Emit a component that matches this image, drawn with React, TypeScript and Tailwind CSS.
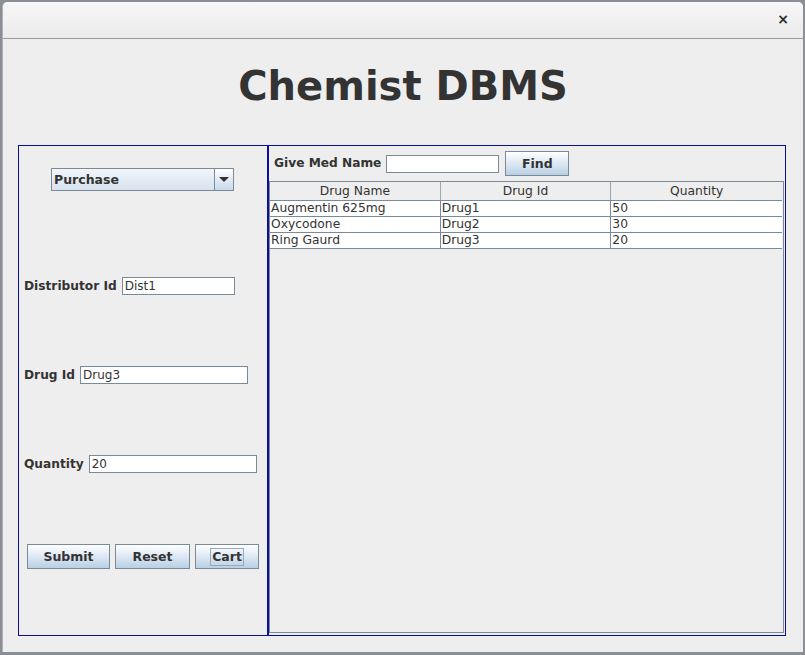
import React from "react"

const rows = [
  { name: "Augmentin 625mg", id: "Drug1", qty: "50" },
  { name: "Oxycodone", id: "Drug2", qty: "30" },
  { name: "Ring Gaurd", id: "Drug3", qty: "20" },
]

function Field({ value, width }: { value: string; width: string }) {
  return (
    <div className={`${width} h-[18px] bg-white border border-[#7a8a99] pl-[2px] text-[12px] leading-[16px] text-[#333]`}>
      {value}
    </div>
  )
}

function Btn({ label, width, focus }: { label: string; width: string; focus?: boolean }) {
  return (
    <div className={`${width} h-[25px] border border-[#7a8a99] bg-gradient-to-b from-[#ffffff] via-[#dde8f3] to-[#b8cfe5] flex items-center justify-center text-[12.5px] font-bold text-[#333]`}>
      <span className={focus ? "border border-[#9aa8b8] px-[1px] leading-[16px]" : "leading-[16px]"}>{label}</span>
    </div>
  )
}

export default function App() {
  return (
    <div className="w-[805px] h-[655px] bg-[#8a8f96] pl-[2px] pt-[2px] overflow-hidden" style={{ fontFamily: '"DejaVu Sans", sans-serif' }}>
      <div className="w-[801px] h-[650px] bg-[#eeeeee] rounded-t-[5px] border-l border-[#b0b0b0] flex flex-col">
        {/* title bar */}
        <div className="h-[37px] rounded-t-[5px] bg-gradient-to-b from-[#f7f7f7] to-[#ebebeb] border-b border-[#9a9a9a] flex items-center justify-end pr-[14px]">
          <span className="text-[14px] font-bold text-[#2e2e2e] leading-none pb-[2px]">×</span>
        </div>

        {/* heading */}
        <div className="h-[106px] flex items-center justify-center">
          <h1 className="text-[40px] font-bold text-[#333] leading-none pb-[12px]">Chemist DBMS</h1>
        </div>

        <div className="flex pl-[15px] h-[491px]">
          {/* left panel */}
          <div className="w-[250px] h-full border border-[#0e0e9e] flex flex-col">
            <div className="ml-[32px] mt-[22px] w-[183px] h-[23px] border border-[#7a8a99] bg-gradient-to-b from-[#f2f6fa] to-[#d6e2ee] flex">
              <div className="flex-1 pl-[2px] text-[12.5px] font-bold text-[#333] leading-[21px]">Purchase</div>
              <div className="w-[19px] border-l border-[#7a8a99] bg-gradient-to-b from-[#ffffff] to-[#c8d9ea] flex items-center justify-center">
                <div className="w-0 h-0 border-l-[5px] border-r-[5px] border-t-[5px] border-l-transparent border-r-transparent border-t-[#333]" />
              </div>
            </div>

            <div className="mt-[86px] ml-[5px] h-[18px] flex items-center gap-[5px]">
              <span className="text-[12.2px] font-bold text-[#333] leading-[18px]">Distributor Id</span>
              <Field value="Dist1" width="w-[113px]" />
            </div>

            <div className="mt-[71px] ml-[5px] h-[18px] flex items-center gap-[5px]">
              <span className="text-[12.2px] font-bold text-[#333] leading-[18px]">Drug Id</span>
              <Field value="Drug3" width="w-[168px]" />
            </div>

            <div className="mt-[71px] ml-[5px] h-[18px] flex items-center gap-[5px]">
              <span className="text-[12.2px] font-bold text-[#333] leading-[18px]">Quantity</span>
              <Field value="20" width="w-[168px]" />
            </div>

            <div className="mt-[71px] ml-[8px] flex gap-[5px]">
              <Btn label="Submit" width="w-[83px]" />
              <Btn label="Reset" width="w-[75px]" />
              <Btn label="Cart" width="w-[64px]" focus />
            </div>
          </div>

          {/* right panel */}
          <div className="w-[518px] h-full border border-[#0e0e9e] flex flex-col">
            <div className="h-[35px] flex items-center pl-[5px]">
              <span className="text-[12.2px] font-bold text-[#333] mr-[5px]">Give Med Name</span>
              <Field value="" width="w-[113px]" />
              <div className="ml-[6px]">
                <Btn label="Find" width="w-[64px]" />
              </div>
            </div>
            <div className="flex-1 mr-[1px] mb-[2px] border border-[#7a8a99] bg-[#eeeeee] pr-[1px]">
              <div className="grid grid-cols-3 h-[19px] bg-[#eeeeee] border-b border-[#7a8a99]">
                {["Drug Name", "Drug Id", "Quantity"].map((h, i) => (
                  <div key={h} className={`text-center text-[12.3px] text-[#333] leading-[18px] ${i < 2 ? "border-r border-[#9aa6b2]" : ""}`}>
                    {h}
                  </div>
                ))}
              </div>
              {rows.map((r) => (
                <div key={r.id} className="grid grid-cols-3 h-[16px] bg-white border-b border-[#7a8a99]">
                  <div className="border-r border-[#7a8a99] pl-[1px] text-[12.3px] leading-[15px] text-[#333]">{r.name}</div>
                  <div className="border-r border-[#7a8a99] pl-[1px] text-[12.3px] leading-[15px] text-[#333]">{r.id}</div>
                  <div className="pl-[1px] text-[12.3px] leading-[15px] text-[#333]">{r.qty}</div>
                </div>
              ))}
            </div>
          </div>
        </div>
      </div>
    </div>
  )
}
